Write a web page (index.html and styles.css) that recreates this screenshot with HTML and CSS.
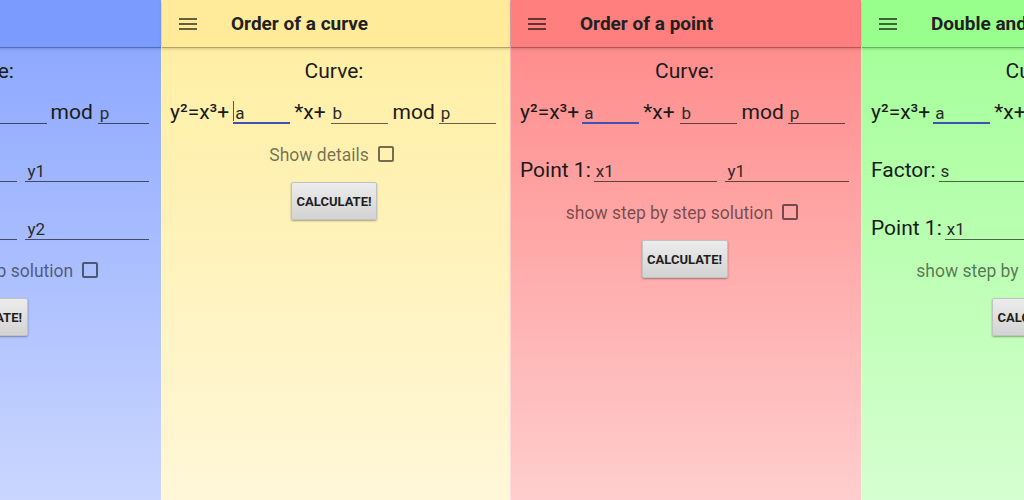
FILE: index.html
```html
<!DOCTYPE html>
<html>
<head>
<meta charset="utf-8">
<link rel="stylesheet" href="styles.css">
</head>
<body>
<div class="strip">

  <section class="panel panel-blue">
    <header class="bar">
      <svg class="menu" width="18" height="12" viewBox="0 0 18 12"><rect y="0" width="18" height="2"/><rect y="5" width="18" height="2"/><rect y="10" width="18" height="2"/></svg>
      <span class="title">Add points</span>
    </header>
    <div class="content">
      <div class="heading">Curve:</div>
      <div class="row curve-row">
        <span class="label">y²=x³+</span>
        <span class="field field-a focused"><span class="hint">a</span></span>
        <span class="label op">*x+</span>
        <span class="field field-b"><span class="hint">b</span></span>
        <span class="label mod">mod</span>
        <span class="field field-p"><span class="hint">p</span></span>
      </div>
      <div class="row point-row">
        <span class="label">Point 1:</span>
        <span class="field grow"><span class="hint">x1</span></span>
        <span class="field grow"><span class="hint">y1</span></span>
      </div>
      <div class="row point-row">
        <span class="label">Point 2:</span>
        <span class="field grow"><span class="hint">x2</span></span>
        <span class="field grow"><span class="hint">y2</span></span>
      </div>
      <div class="check-row"><span>show step by step solution</span><span class="box"></span></div>
      <div class="btn-row"><button class="calc">CALCULATE!</button></div>
    </div>
  </section>

  <section class="panel panel-yellow">
    <header class="bar">
      <svg class="menu" width="18" height="12" viewBox="0 0 18 12"><rect y="0" width="18" height="2"/><rect y="5" width="18" height="2"/><rect y="10" width="18" height="2"/></svg>
      <span class="title">Order of a curve</span>
    </header>
    <div class="content">
      <div class="heading">Curve:</div>
      <div class="row curve-row">
        <span class="label">y²=x³+</span>
        <span class="field field-a focused"><span class="caret"></span><span class="hint">a</span></span>
        <span class="label op">*x+</span>
        <span class="field field-b"><span class="hint">b</span></span>
        <span class="label mod">mod</span>
        <span class="field field-p"><span class="hint">p</span></span>
      </div>
      <div class="check-row"><span>Show details</span><span class="box"></span></div>
      <div class="btn-row"><button class="calc">CALCULATE!</button></div>
    </div>
  </section>

  <section class="panel panel-red">
    <header class="bar">
      <svg class="menu" width="18" height="12" viewBox="0 0 18 12"><rect y="0" width="18" height="2"/><rect y="5" width="18" height="2"/><rect y="10" width="18" height="2"/></svg>
      <span class="title">Order of a point</span>
    </header>
    <div class="content">
      <div class="heading">Curve:</div>
      <div class="row curve-row">
        <span class="label">y²=x³+</span>
        <span class="field field-a focused"><span class="hint">a</span></span>
        <span class="label op">*x+</span>
        <span class="field field-b"><span class="hint">b</span></span>
        <span class="label mod">mod</span>
        <span class="field field-p"><span class="hint">p</span></span>
      </div>
      <div class="row point-row">
        <span class="label">Point 1:</span>
        <span class="field grow"><span class="hint">x1</span></span>
        <span class="field grow"><span class="hint">y1</span></span>
      </div>
      <div class="check-row"><span>show step by step solution</span><span class="box"></span></div>
      <div class="btn-row"><button class="calc">CALCULATE!</button></div>
    </div>
  </section>

  <section class="panel panel-green">
    <header class="bar">
      <svg class="menu" width="18" height="12" viewBox="0 0 18 12"><rect y="0" width="18" height="2"/><rect y="5" width="18" height="2"/><rect y="10" width="18" height="2"/></svg>
      <span class="title">Double and add</span>
    </header>
    <div class="content">
      <div class="heading">Curve:</div>
      <div class="row curve-row">
        <span class="label">y²=x³+</span>
        <span class="field field-a focused"><span class="hint">a</span></span>
        <span class="label op">*x+</span>
        <span class="field field-b"><span class="hint">b</span></span>
        <span class="label mod">mod</span>
        <span class="field field-p"><span class="hint">p</span></span>
      </div>
      <div class="row point-row">
        <span class="label">Factor:</span>
        <span class="field grow"><span class="hint">s</span></span>
      </div>
      <div class="row point-row">
        <span class="label">Point 1:</span>
        <span class="field grow"><span class="hint">x1</span></span>
        <span class="field grow"><span class="hint">y1</span></span>
      </div>
      <div class="check-row"><span>show step by step solution</span><span class="box"></span></div>
      <div class="btn-row"><button class="calc">CALCULATE!</button></div>
    </div>
  </section>

</div>
</body>
</html>
```

FILE: styles.css
```css
* { box-sizing: border-box; }

html, body {
  margin: 0;
  padding: 0;
  width: 1024px;
  height: 500px;
  overflow: hidden;
  font-family: Roboto, "Noto Sans", sans-serif;
  color: #1a1a1a;
}

.strip {
  display: flex;
  height: 500px;
}

.panel {
  flex: none;
  width: 350px;
  height: 500px;
  display: flex;
  flex-direction: column;
  border-left: 1px solid rgba(255, 255, 255, 0.35);
}

.panel-blue { margin-left: -190px; width: 351px; background: linear-gradient(#88a4ff, #cad6ff); border-left: none; }
.panel-yellow { width: 349px; background: linear-gradient(#ffee9f, #fff7d8); }
.panel-red { width: 351px; background: linear-gradient(#ff8686, #ffcdcd); }
.panel-green { width: 350px; background: linear-gradient(#a1ff95, #d5ffd0); }

.bar {
  height: 48px;
  flex: none;
  display: flex;
  align-items: center;
  padding-left: 17px;
  border-bottom: 1px solid rgba(0, 0, 0, 0.3);
  box-shadow: 0 1px 3px rgba(0, 0, 0, 0.18);
  position: relative;
  z-index: 1;
}
.panel-blue .bar { background: #7c9bff; }
.panel-yellow .bar { background: #ffeb99; }
.panel-red .bar { background: #ff7f7f; }
.panel-green .bar { background: #99ff8c; }

.menu { fill: rgba(0, 0, 0, 0.6); flex: none; }

.title {
  margin-left: 34px;
  font-size: 19px;
  font-weight: 700;
  color: #212121;
  white-space: nowrap;
}

.content {
  padding: 10px 12px 0 9px;
}
.panel-blue .content { padding-left: 10px; }
.panel-yellow .content { padding-left: 8px; }

.heading {
  height: 26px;
  line-height: 26px;
  font-size: 21px;
  text-align: center;
}

.row {
  display: flex;
  align-items: flex-end;
  height: 40px;
}
.point-row { height: 58px; }

.label {
  font-size: 21px;
  line-height: 26px;
  margin-bottom: -1px;
  white-space: nowrap;
  flex: none;
}

.field {
  height: 26px;
  border-bottom: 1px solid rgba(0, 0, 0, 0.6);
  display: flex;
  align-items: flex-end;
  padding-left: 2px;
  flex: none;
  position: relative;
}
.field.focused { border-bottom: 2px solid #3f51b5; }
.field.grow { flex: 1; }

.hint {
  font-size: 17px;
  line-height: 20px;
  color: #2b2b2b;
}
.field.focused .hint { margin-bottom: -1px; }

.caret {
  position: absolute;
  left: 0;
  top: 3px;
  width: 1px;
  height: 20px;
  background: #3f51b5;
}

.curve-row .field-a { width: 57px; margin-left: 3px; }
.panel-yellow .curve-row .field-a { margin-left: 4px; }
.curve-row .op { margin-left: 4px; }
.curve-row .field-b { width: 57px; margin-left: 5px; }
.curve-row .mod { margin-left: 5px; }
.curve-row .field-p { width: 57px; margin-left: 4px; }

.panel-blue .curve-row .field-a,
.panel-blue .curve-row .field-b { width: 62px; }
.panel-blue .curve-row .mod { margin-left: 4px; }
.panel-blue .curve-row .field-p { flex: 1; margin-left: 5px; }

.point-row .label { margin-right: 3px; }
.point-row .field + .field { margin-left: 8px; }

.check-row {
  margin-top: 18px;
  height: 24px;
  display: flex;
  align-items: center;
  justify-content: center;
  font-size: 17.5px;
  color: rgba(0, 0, 0, 0.55);
  padding-top: 2px;
}

.box {
  width: 16px;
  height: 16px;
  margin-left: 9px;
  margin-right: 5px;
  border: 2px solid rgba(0, 0, 0, 0.55);
  border-radius: 2px;
  margin-top: -2px;
}

.btn-row {
  margin-top: 16px;
  display: flex;
  justify-content: center;
}

.calc {
  width: 86px;
  height: 38px;
  padding: 0;
  font-family: Roboto, "Noto Sans", sans-serif;
  font-size: 13px;
  font-weight: 700;
  color: #1e1e1e;
  background: linear-gradient(#ececec, #d3d3d3);
  border: 1px solid #c2c2c2;
  border-radius: 2px;
  box-shadow: 0 1px 2px rgba(0, 0, 0, 0.35);
}
```
